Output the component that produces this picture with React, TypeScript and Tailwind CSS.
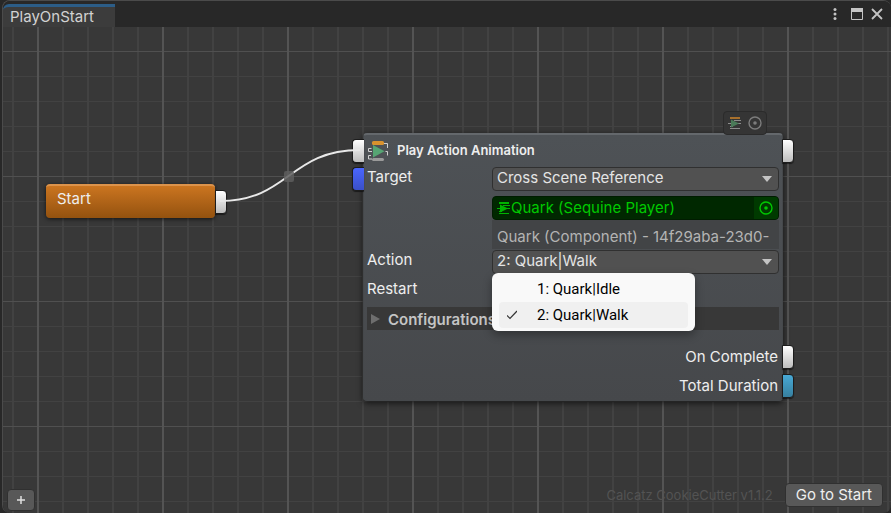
import clsx from "clsx";
import type { ReactNode } from "react";

const actions = ["1: Quark|Idle", "2: Quark|Walk"];
const selectedAction = actions[1];

type PortProps = {
  side: "left" | "right";
  tone: "white" | "blue" | "cyan";
};

// Connection socket, hangs on the outer edge of a row
function Port({ side, tone }: PortProps) {
  return (
    <span
      className={clsx(
        "absolute top-1/2 h-6 w-3 -translate-y-1/2 border border-[#1c1c1c] bg-linear-to-b shadow-[0_1px_1px_#0008]",
        side === "left" ? "right-full rounded-l-sm border-r-0" : "left-full rounded-r-sm",
        tone === "white" && "from-white to-[#bdbdbd]",
        tone === "blue" && "from-[#4a66ff] to-[#3a50c8]",
        tone === "cyan" && "from-[#48a9d6] to-[#37809f]"
      )}
    />
  );
}

function SequineIcon({ className }: { className?: string }) {
  return (
    <svg viewBox="0 0 20 20" className={className} aria-hidden="true">
      <rect x="4" y="0" width="12" height="4" rx="1.5" fill="#d9922e" />
      <rect x="4" y="17" width="12" height="3" rx="1.5" fill="#9a9a9a" />
      <path
        d="M16 2.5h3.5V7M17.500 10.500h2v4M3.500 7.500H.5v3H4M3 14.500H.5v3.500H4"
        fill="none"
        stroke="#d0d0d0"
      />
      <path d="M5 4L16.500 10.200L5 16.500z" fill="#56a573" />
    </svg>
  );
}

function SequineGlyph({ className, green }: { className?: string; green?: boolean }) {
  return (
    <svg viewBox="0 0 14 14" className={className} aria-hidden="true">
      <path d="M2 2h10" stroke={green ? "#00b400" : "#a8702c"} strokeWidth="2" />
      <path
        d="M6 4.500h7M0 7.500h3M9 7.500h4M2 10.500h3M2 12.500h10"
        stroke={green ? "#00b400" : "#8c8c8c"}
      />
      <path d="M3 3.500L11 7.500L3 11.500z" fill={green ? "#00b400" : "#4a7a58"} />
    </svg>
  );
}

function TargetGlyph() {
  return (
    <svg viewBox="0 0 14 14" className="size-3.5" aria-hidden="true">
      <circle cx="7" cy="7" r="6" fill="none" stroke="currentColor" strokeWidth="1.400" />
      <circle cx="7" cy="7" r="1.800" fill="currentColor" />
    </svg>
  );
}

type DropdownProps = {
  id: string;
  options: string[];
  value: string;
};

function Dropdown({ id, options, value }: DropdownProps) {
  return (
    <div className="relative h-6">
      <select
        id={id}
        defaultValue={value}
        className="block h-6 w-full appearance-none rounded-sm border border-[#303030] bg-[#515151] pr-6 pb-0.5 pl-1 text-[15px] leading-5 text-[#e4e4e4]"
      >
        {options.map((option) => (
          <option key={option}>{option}</option>
        ))}
      </select>
      <svg
        viewBox="0 0 10 6"
        className="pointer-events-none absolute top-[9px] right-[7px] h-1.5 w-2.5"
        aria-hidden="true"
      >
        <path d="M0 0h10L5 6z" fill="#c4c4c4" />
      </svg>
    </div>
  );
}

function Field({ id, label, children }: { id: string; label: string; children: ReactNode }) {
  return (
    <div className="flex">
      <label htmlFor={id} className="h-5 w-[125px] shrink-0 leading-5">
        {label}
      </label>
      <div className="min-w-0 flex-1">{children}</div>
    </div>
  );
}

function TitleBar() {
  return (
    <header className="flex h-[26px] items-end justify-between bg-[#282828]">
      <div className="h-[23px] w-[112px] rounded-tl-md border-t-3 border-[#2c5d87] bg-[#3c3c3c] pl-[7px] text-[15px] leading-5 text-[#d2d2d2]">
        PlayOnStart
      </div>
      <div className="flex h-[26px] items-center pr-2 text-[#c4c4c4]">
        <button type="button" aria-label="Menu" className="mr-3.5">
          <svg viewBox="0 0 4 12" className="h-3 w-1">
            <circle cx="2" cy="1.500" r="1.500" fill="currentColor" />
            <circle cx="2" cy="6" r="1.500" fill="currentColor" />
            <circle cx="2" cy="10.500" r="1.500" fill="currentColor" />
          </svg>
        </button>
        <button type="button" aria-label="Maximize" className="mr-2">
          <svg viewBox="0 0 12 12" className="size-3">
            <path d="M.5 .5h11v11H.5z" fill="none" stroke="currentColor" />
            <path d="M0 0h12v4H0z" fill="currentColor" />
          </svg>
        </button>
        <button type="button" aria-label="Close">
          <svg viewBox="0 0 12 12" className="size-3">
            <path d="M1 1l10 10M11 1L1 11" stroke="currentColor" strokeWidth="1.800" />
          </svg>
        </button>
      </div>
    </header>
  );
}

function StartNode() {
  return (
    <section className="absolute top-[157px] left-[43px] w-[169px] rounded-sm border-t-2 border-[#dc934b] bg-linear-to-b from-[#cb7520] to-[#94520f] shadow-[0_1px_4px_#000a]">
      <h2 className="h-8 pl-[11px] leading-[26px]">Start</h2>
      <Port side="right" tone="white" />
    </section>
  );
}

function ActionMenu() {
  return (
    <ul
      role="listbox"
      aria-label="Action"
      className="absolute top-[23px] left-0 z-10 w-[203px] rounded-md bg-[#f9f9f9] px-[7px] py-[3px] font-[Roboto,sans-serif] text-[15px] text-black shadow-[0_4px_10px_#0005]"
    >
      {actions.map((action) => (
        <li
          key={action}
          role="option"
          aria-selected={action === selectedAction}
          className={clsx(
            "flex h-[26px] items-center rounded-sm",
            action === selectedAction && "bg-[#f0f0f0]"
          )}
        >
          <span className="flex w-[38px] pl-2">
            {action === selectedAction && (
              <svg viewBox="0 0 10 10" className="size-2.5" aria-hidden="true">
                <path d="M0 5.500l3 3L10 1" fill="none" stroke="#333" strokeWidth="1.200" />
              </svg>
            )}
          </span>
          {action}
        </li>
      ))}
    </ul>
  );
}

function AnimationNode() {
  return (
    <section className="absolute top-[106px] left-[360px] w-[420px] rounded-sm border border-t-2 border-[#45484b] border-t-[#64686c] bg-linear-to-b from-[#4e5256] to-[#46484b] px-[3px] pb-[2px] shadow-[0_2px_6px_#000a]">
      <div className="absolute right-[15px] bottom-full flex h-6 items-center gap-1.5 rounded-sm border border-[#2b2b2b] bg-[#353535] px-1 text-[#7c7c7c]">
        <SequineGlyph className="size-3.5" />
        <TargetGlyph />
      </div>

      <header className="relative -mx-[3px] flex h-8 items-center gap-[9px] pl-1">
        <Port side="left" tone="white" />
        <SequineIcon className="size-5" />
        <h2 className="text-[13px] font-semibold">Play Action Animation</h2>
        <Port side="right" tone="white" />
      </header>

      <div className="relative -mx-[3px] px-[3px]">
        <Port side="left" tone="blue" />
        <Field id="target" label="Target">
          <Dropdown id="target" options={["Cross Scene Reference"]} value="Cross Scene Reference" />
        </Field>
      </div>

      <div className="mt-[5px] ml-[125px]">
        <div className="flex h-6 items-center overflow-hidden rounded-sm border border-[#001c00] bg-[#002800] pl-1 text-[#00c800]">
          <SequineGlyph className="size-3.5" green />
          <span className="flex-1 leading-5">Quark (Sequine Player)</span>
          <button
            type="button"
            aria-label="Pick object"
            className="flex h-full w-6 items-center justify-center bg-[#003a00]"
          >
            <TargetGlyph />
          </button>
        </div>
        <input
          readOnly
          aria-label="Reference id"
          value="Quark (Component) - 14f29aba-23d0-"
          className="mb-px block h-[29px] w-full bg-[#424446] px-[5px] pt-1 text-[#b4b4b4] outline-none"
        />
      </div>

      <div className="relative">
        <Field id="action" label="Action">
          <div className="relative">
            <Dropdown id="action" options={actions} value={selectedAction} />
            <ActionMenu />
          </div>
        </Field>
      </div>

      <div className="mt-[5px] h-6">
        <Field id="restart" label="Restart">
          <input id="restart" type="checkbox" className="ml-1 size-4" />
        </Field>
      </div>

      <button
        type="button"
        className="mt-1 flex h-[23px] w-full items-center gap-2 bg-[#383838] pl-1 font-semibold text-[#c4c4c4]"
      >
        <svg viewBox="0 0 9 10" className="h-2.5 w-[9px]" aria-hidden="true">
          <path d="M0 0L9 5L0 10z" fill="#6e6e6e" />
        </svg>
        <span className="pt-[3px]">Configurations</span>
      </button>

      <div className="relative -mx-[3px] mt-[15px] pr-1 text-right leading-6">
        On Complete
        <Port side="right" tone="white" />
      </div>
      <div className="relative -mx-[3px] mt-[5px] pr-1 text-right leading-6">
        Total Duration
        <Port side="right" tone="cyan" />
      </div>
    </section>
  );
}

export default function App() {
  return (
    <div className="flex h-screen flex-col bg-[#282828] pl-0.5 font-[Inter,sans-serif] text-[15px] text-[#eeeeee]">
      <div className="flex flex-1 flex-col overflow-hidden rounded-lg border-t border-l border-[#4b4b4b]">
        <TitleBar />
        <main className="relative flex flex-1 flex-col justify-end overflow-hidden bg-[#383838] bg-[linear-gradient(90deg,#545454_2px,transparent_2px),linear-gradient(#505050_1px,transparent_1px),linear-gradient(90deg,#424242_2px,transparent_2px),linear-gradient(#424242_1px,transparent_1px)] bg-size-[125px_125px,125px_125px,25px_25px,25px_25px] bg-position-[34px_24px,34px_24px,9px_24px,9px_24px]">
          {/* Link between the two nodes */}
          <svg className="absolute top-0 left-0 z-10 h-48 w-96" aria-hidden="true">
            <path d="M217 174C286 174 286 123 357 123" fill="none" stroke="#e8e8e8" strokeWidth="2" />
            <rect x="281" y="144" width="10" height="11" rx="2" fill="#5e5e5e" fillOpacity=".85" />
          </svg>
          <StartNode />
          <AnimationNode />

          <footer className="flex items-end gap-3 pr-2 pb-1.5 pl-1">
            <button
              type="button"
              aria-label="Add"
              className="-mb-1 flex h-[22px] w-7 items-center justify-center rounded-sm border border-[#303030] bg-[#585858]"
            >
              <svg viewBox="0 0 8 8" className="size-2">
                <path d="M4 0v8M0 4h8" stroke="#e0e0e0" strokeWidth="1.500" />
              </svg>
            </button>
            <span className="ml-auto text-[13px] leading-6 text-[#535353]">
              Calcatz CookieCutter v1.1.2
            </span>
            <button
              type="button"
              className="h-6 rounded-sm border border-[#303030] bg-[#585858] px-2.5 leading-5"
            >
              Go to Start
            </button>
          </footer>
        </main>
      </div>
    </div>
  );
}
